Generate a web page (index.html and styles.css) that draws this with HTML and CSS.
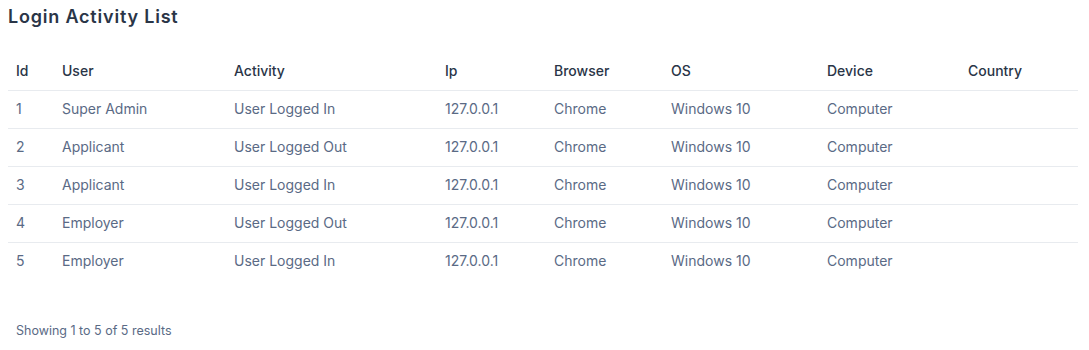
FILE: index.html
```html
<!DOCTYPE html>
<html>
<head>
<meta charset="utf-8">
<link rel="stylesheet" href="styles.css">
</head>
<body>
<div class="card">
  <h2 class="title">Login Activity List</h2>
  <table class="list">
    <colgroup>
      <col class="c-id"><col class="c-user"><col class="c-act"><col class="c-ip"><col class="c-br"><col class="c-os"><col class="c-dev"><col class="c-cty">
    </colgroup>
    <thead>
      <tr><th>Id</th><th>User</th><th>Activity</th><th>Ip</th><th>Browser</th><th>OS</th><th>Device</th><th>Country</th></tr>
    </thead>
    <tbody>
      <tr><td>1</td><td>Super Admin</td><td>User Logged In</td><td>127.0.0.1</td><td>Chrome</td><td>Windows 10</td><td>Computer</td><td></td></tr>
      <tr><td>2</td><td>Applicant</td><td>User Logged Out</td><td>127.0.0.1</td><td>Chrome</td><td>Windows 10</td><td>Computer</td><td></td></tr>
      <tr><td>3</td><td>Applicant</td><td>User Logged In</td><td>127.0.0.1</td><td>Chrome</td><td>Windows 10</td><td>Computer</td><td></td></tr>
      <tr><td>4</td><td>Employer</td><td>User Logged Out</td><td>127.0.0.1</td><td>Chrome</td><td>Windows 10</td><td>Computer</td><td></td></tr>
      <tr class="last"><td>5</td><td>Employer</td><td>User Logged In</td><td>127.0.0.1</td><td>Chrome</td><td>Windows 10</td><td>Computer</td><td></td></tr>
    </tbody>
  </table>
  <p class="summary">Showing 1 to 5 of 5 results</p>
</div>
</body>
</html>
```
FILE: styles.css
```css
html, body { margin: 0; padding: 0; background: #fff; }
body { font-family: "Inter", "Open Sans", sans-serif; }
.card { padding: 0 11px 0 8px; }
.title {
  margin: 0;
  padding-top: 6px;
  height: 48px;
  box-sizing: border-box;
  font-size: 18px;
  font-weight: 600;
  color: #2a3547;
  letter-spacing: 0.8px;
  line-height: 22px;
}
.list {
  width: 1070px;
  border-collapse: collapse;
  table-layout: fixed;
  font-size: 14px;
}
.c-id { width: 46px; }
.c-user { width: 172px; }
.c-act { width: 211px; }
.c-ip { width: 109px; }
.c-br { width: 117px; }
.c-os { width: 156px; }
.c-dev { width: 141px; }
.c-cty { width: 118px; }
.list th {
  text-align: left;
  font-weight: 500;
  color: #2a3547;
  padding: 2px 8px 0;
  height: 40px;
  border-bottom: 1px solid #e8ebef;
}
.list td {
  color: #5a6a85;
  padding: 0 8px 2px;
  height: 35px;
  border-bottom: 1px solid #e8ebef;
}
.list tr.last td { border-bottom: none; }
.summary {
  margin: 0;
  padding: 43px 0 0 8px;
  font-size: 12.5px;
  color: #5a6a85;
}
```
